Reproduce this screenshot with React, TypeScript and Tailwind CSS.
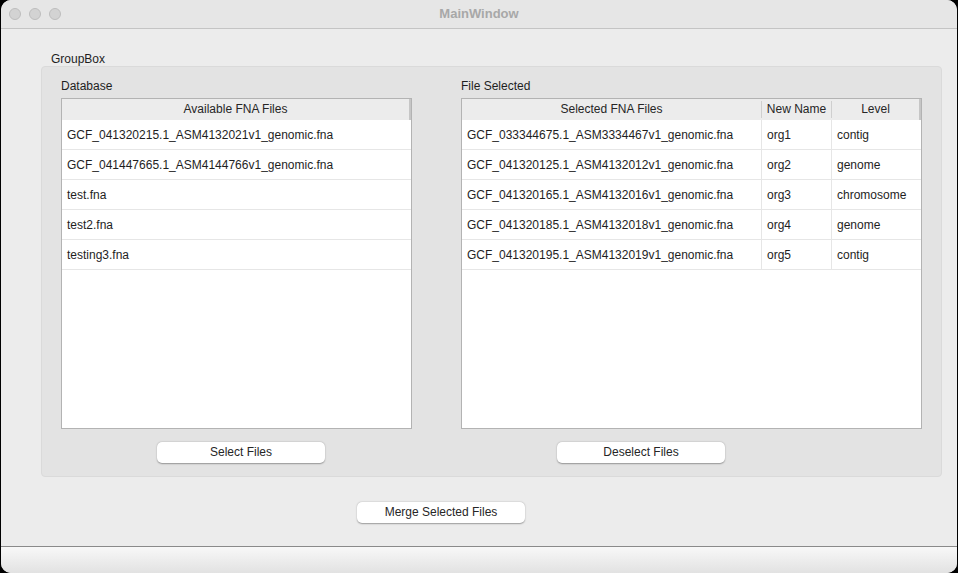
const available = [
  'GCF_041320215.1_ASM4132021v1_genomic.fna',
  'GCF_041447665.1_ASM4144766v1_genomic.fna',
  'test.fna',
  'test2.fna',
  'testing3.fna',
]

const selected = [
  { file: 'GCF_033344675.1_ASM3334467v1_genomic.fna', name: 'org1', level: 'contig' },
  { file: 'GCF_041320125.1_ASM4132012v1_genomic.fna', name: 'org2', level: 'genome' },
  { file: 'GCF_041320165.1_ASM4132016v1_genomic.fna', name: 'org3', level: 'chromosome' },
  { file: 'GCF_041320185.1_ASM4132018v1_genomic.fna', name: 'org4', level: 'genome' },
  { file: 'GCF_041320195.1_ASM4132019v1_genomic.fna', name: 'org5', level: 'contig' },
]

function MacButton({ label }: { label: string }) {
  return (
    <button
      type="button"
      className="block h-[21px] w-[168px] rounded-[5px] bg-white text-[12px] leading-[21px] text-[#262626] shadow-[0_0.5px_1.5px_rgba(0,0,0,0.35)]"
    >
      {label}
    </button>
  )
}

function HeaderCell({ label, className = '' }: { label: string; className?: string }) {
  return (
    <div className={`flex h-[21px] items-center justify-center pb-[2px] text-[12px] text-[#262626] ${className}`}>
      {label}
    </div>
  )
}

export default function App() {
  return (
    <div
      className="h-[573px] w-[958px] bg-black px-px"
      style={{ fontFamily: '"Liberation Sans", Arial, sans-serif' }}
    >
      <div className="flex h-full flex-col overflow-hidden rounded-[10px] bg-[#ececec]">
        {/* title bar */}
        <div className="relative flex h-[29px] shrink-0 items-center justify-center border-b border-[#c4c4c4] bg-[#e6e6e6]">
          <div className="absolute left-[8px] top-[8px] flex gap-[8px]">
            <span className="h-[12px] w-[12px] rounded-full border border-[#bdbdbd] bg-[#d3d3d3]" />
            <span className="h-[12px] w-[12px] rounded-full border border-[#bdbdbd] bg-[#d3d3d3]" />
            <span className="h-[12px] w-[12px] rounded-full border border-[#bdbdbd] bg-[#d3d3d3]" />
          </div>
          <span className="text-[13px] font-bold text-[#a8a8a8]">MainWindow</span>
        </div>

        {/* central widget */}
        <div className="flex flex-1 flex-col pl-[40px]">
          <div className="ml-[10px] mt-[23px] text-[12px] leading-[14px] text-[#1e1e1e]">GroupBox</div>
          <div className="flex w-[901px] gap-[49px] rounded-[4px] border border-[#dadada] bg-[#e3e3e3] px-[19px] pb-[13px] pt-[12px]">
            {/* Database */}
            <div className="flex w-[351px] flex-col">
              <div className="mb-[5px] text-[12px] leading-[14px] text-[#1e1e1e]">Database</div>
              <div className="flex h-[331px] flex-col border border-[#b3b3b3] bg-white">
                <div className="flex bg-[#ececec]">
                  <HeaderCell label="Available FNA Files" className="flex-1 border-r-2 border-[#c6c6c6]" />
                </div>
                {available.map((f) => (
                  <div
                    key={f}
                    className="flex h-[30px] items-center border-b border-[#e6e6e6] pl-[5px] text-[12px] text-[#1e1e1e]"
                  >
                    {f}
                  </div>
                ))}
              </div>
              <div className="ml-[96px] mt-[13px] flex">
                <MacButton label="Select Files" />
              </div>
            </div>

            {/* File Selected */}
            <div className="flex w-[461px] flex-col">
              <div className="mb-[5px] text-[12px] leading-[14px] text-[#1e1e1e]">File Selected</div>
              <div className="flex h-[331px] flex-col border border-[#b3b3b3] bg-white">
                <div className="flex items-center bg-[#ececec]">
                  <HeaderCell label="Selected FNA Files" className="w-[299px]" />
                  <span className="h-[17px] w-px bg-[#cfcfcf]" />
                  <HeaderCell label="New Name" className="w-[69px]" />
                  <span className="h-[17px] w-px bg-[#cfcfcf]" />
                  <HeaderCell label="Level" className="flex-1 border-r-2 border-[#c6c6c6]" />
                </div>
                {selected.map((r) => (
                  <div
                    key={r.file}
                    className="flex h-[30px] items-stretch border-b border-[#e6e6e6] text-[12px] text-[#1e1e1e]"
                  >
                    <div className="flex w-[300px] items-center border-r border-[#e6e6e6] pl-[5px]">{r.file}</div>
                    <div className="flex w-[70px] items-center border-r border-[#e6e6e6] pl-[5px]">{r.name}</div>
                    <div className="flex flex-1 items-center pl-[5px]">{r.level}</div>
                  </div>
                ))}
              </div>
              <div className="ml-[96px] mt-[13px] flex">
                <MacButton label="Deselect Files" />
              </div>
            </div>
          </div>

          <div className="ml-[316px] mt-[25px] flex">
            <MacButton label="Merge Selected Files" />
          </div>
        </div>

        {/* status bar */}
        <div className="h-[27px] shrink-0 border-t border-[#8a8a8a] bg-gradient-to-b from-[#f8f8f8] to-[#e2e2e2]" />
      </div>
    </div>
  )
}
